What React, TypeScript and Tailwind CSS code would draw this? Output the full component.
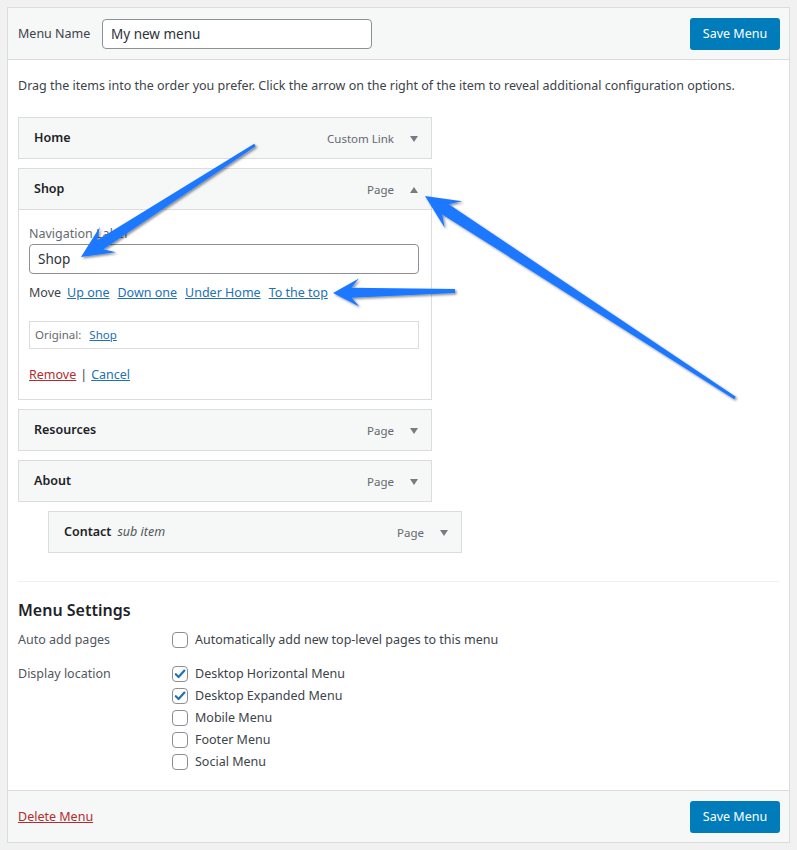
import React from "react";

type P = [number, number];

function arrowPoints(tail: P, tip: P, tw: number, sw: number, hl: number, hw: number, notch = 0.72): string {
  const dx = tip[0] - tail[0];
  const dy = tip[1] - tail[1];
  const len = Math.hypot(dx, dy);
  const ux = dx / len, uy = dy / len;
  const nx = -uy, ny = ux;
  const neck: P = [tip[0] - ux * hl * notch, tip[1] - uy * hl * notch];
  const barb: P = [tip[0] - ux * hl, tip[1] - uy * hl];
  const pts: P[] = [
    [tail[0] + nx * tw / 2, tail[1] + ny * tw / 2],
    [neck[0] + nx * sw / 2, neck[1] + ny * sw / 2],
    [barb[0] + nx * hw / 2, barb[1] + ny * hw / 2],
    tip,
    [barb[0] - nx * hw / 2, barb[1] - ny * hw / 2],
    [neck[0] - nx * sw / 2, neck[1] - ny * sw / 2],
    [tail[0] - nx * tw / 2, tail[1] - ny * tw / 2],
  ];
  return pts.map((p) => `${p[0].toFixed(1)},${p[1].toFixed(1)}`).join(" ");
}

function Caret({ up }: { up?: boolean }) {
  return (
    <svg width="10" height="8" viewBox="0 0 10 8" className="block">
      {up ? <polygon points="1,7 9,7 5,1" fill="#787c82" /> : <polygon points="1,1 9,1 5,7" fill="#787c82" />}
    </svg>
  );
}

function ItemBar({ title, type, sub, up }: { title: string; type: string; sub?: string; up?: boolean }) {
  return (
    <div className="w-[414px] h-[42px] bg-[#f6f7f7] border border-[#dcdcde] flex items-center pl-[15px] pr-[12px] pt-[1px]">
      <div className="flex-1 text-[12.5px] font-semibold text-[#1d2327]">
        {title}
        {sub && <span className="ml-[6px] font-normal italic text-[#50575e]">{sub}</span>}
      </div>
      <span className="text-[11.5px] text-[#646970]">{type}</span>
      <span className="ml-[15px] w-[10px] flex justify-center">
        <Caret up={up} />
      </span>
    </div>
  );
}

function Check({ checked }: { checked?: boolean }) {
  return (
    <span className="w-[16px] h-[16px] rounded-[4px] border border-[#8c8f94] bg-white flex items-center justify-center shrink-0">
      {checked && (
        <svg width="12" height="12" viewBox="0 0 12 12">
          <path d="M1.8 6.2 L4.6 9 L10.4 2.6" stroke="#2271b1" strokeWidth="2.2" fill="none" strokeLinecap="round" strokeLinejoin="round" />
        </svg>
      )}
    </span>
  );
}

function CheckRow({ label, checked }: { label: string; checked?: boolean }) {
  return (
    <div className="flex items-center gap-[7px] h-[22px]">
      <Check checked={checked} />
      <span>{label}</span>
    </div>
  );
}

export default function App() {
  const font = { fontFamily: '"Noto Sans", "Open Sans", Arial, sans-serif' };
  return (
    <div className="relative min-h-[850px] bg-[#f1f1f1] pt-[7px] px-[7px] text-[12.5px] text-[#3c434a]" style={font}>
      <div className="border border-[#dcdcde] bg-white">
        {/* header */}
        <div className="h-[52px] bg-[#f6f7f7] border-b border-[#dcdcde] flex items-center justify-between pl-[10px] pr-[9px]">
          <div className="flex items-center">
            <span className="w-[84px] pt-[2px] text-[#3c434a]">Menu Name</span>
            <div className="w-[270px] h-[30px] rounded-[4px] border border-[#8c8f94] bg-white flex items-center px-[8px] pt-[1px] text-[13.5px] text-[#2c3338]">
              My new menu
            </div>
          </div>
          <div className="h-[32px] w-[90px] rounded-[3px] bg-[#007cba] text-white text-[12.5px] flex items-center justify-center pt-[1px]">
            Save Menu
          </div>
        </div>

        {/* body */}
        <div className="px-[10px] pb-[8px]">
          <p className="pt-[16px] leading-[20px]">
            Drag the items into the order you prefer. Click the arrow on the right of the item to reveal additional configuration options.
          </p>
          <div className="mt-[21px] flex flex-col gap-[9px]">
            <ItemBar title="Home" type="Custom Link" />
            <div className="w-[414px]">
              <ItemBar title="Shop" type="Page" up />
              <div className="border border-t-0 border-[#dcdcde] bg-white pl-[10px] pr-[12px] pt-[14px] pb-[14px]">
                <div className="text-[#646970] leading-[20px]">Navigation Label</div>
                <div className="h-[30px] rounded-[4px] border border-[#8c8f94] flex items-center px-[8px] pt-[1px] text-[13.5px] text-[#2c3338]">
                  Shop
                </div>
                <div className="mt-[9px] h-[20px] flex items-center gap-[6px]">
                  <span>Move</span>
                  <a className="text-[#2271b1] underline">Up one</a>
                  <a className="ml-[2px] text-[#2271b1] underline">Down one</a>
                  <a className="ml-[2px] text-[#2271b1] underline">Under Home</a>
                  <a className="ml-[2px] text-[#2271b1] underline">To the top</a>
                </div>
                <div className="mt-[18px] h-[28px] border border-[#dcdcde] flex items-center px-[5px] text-[11.5px] text-[#646970]">
                  Original:
                  <a className="ml-[8px] text-[#2271b1] underline">Shop</a>
                </div>
                <div className="mt-[16px] h-[20px] flex items-center">
                  <a className="text-[#b32d2e] underline">Remove</a>
                  <span className="mx-[4px]">|</span>
                  <a className="text-[#2271b1] underline">Cancel</a>
                </div>
              </div>
            </div>
            <ItemBar title="Resources" type="Page" />
            <ItemBar title="About" type="Page" />
            <div className="ml-[30px]">
              <ItemBar title="Contact" type="Page" sub="sub item" />
            </div>
          </div>

          <div className="mt-[28px] border-t border-[#f0f0f1]" />
          <h3 className="mt-[15px] text-[16px] font-semibold text-[#1d2327] leading-[26px]">Menu Settings</h3>
          <div className="mt-[6px] flex">
            <div className="w-[154px] leading-[22px] text-[#50575e]">Auto add pages</div>
            <CheckRow label="Automatically add new top-level pages to this menu" />
          </div>
          <div className="mt-[12px] flex">
            <div className="w-[154px] leading-[22px] text-[#50575e]">Display location</div>
            <div className="flex flex-col">
              <CheckRow label="Desktop Horizontal Menu" checked />
              <CheckRow label="Desktop Expanded Menu" checked />
              <CheckRow label="Mobile Menu" />
              <CheckRow label="Footer Menu" />
              <CheckRow label="Social Menu" />
            </div>
          </div>
          <div className="h-[9px]" />
        </div>

        {/* footer */}
        <div className="h-[52px] bg-[#f6f7f7] border-t border-[#dcdcde] flex items-center justify-between pl-[10px] pr-[9px]">
          <a className="text-[#b32d2e] underline pt-[2px]">Delete Menu</a>
          <div className="h-[32px] w-[90px] rounded-[3px] bg-[#007cba] text-white text-[12.5px] flex items-center justify-center pt-[1px]">
            Save Menu
          </div>
        </div>
      </div>

      {/* annotation arrows */}
      <svg className="absolute left-0 top-0 pointer-events-none" width="797" height="850" viewBox="0 0 797 850">
        <defs>
          <filter id="sh" x="-20%" y="-20%" width="140%" height="140%">
            <feDropShadow dx="1.5" dy="1.5" stdDeviation="1.2" floodColor="#000" floodOpacity="0.45" />
          </filter>
        </defs>
        <g fill="#1f78ff" filter="url(#sh)">
          <polygon points={arrowPoints([255, 145], [81, 257], 3, 11, 32, 30)} />
          <polygon points={arrowPoints([455, 291], [333, 293], 4, 10, 26, 28)} />
          <polygon points={arrowPoints([735, 398], [425, 196], 3, 12, 34, 32)} />
        </g>
      </svg>
    </div>
  );
}
